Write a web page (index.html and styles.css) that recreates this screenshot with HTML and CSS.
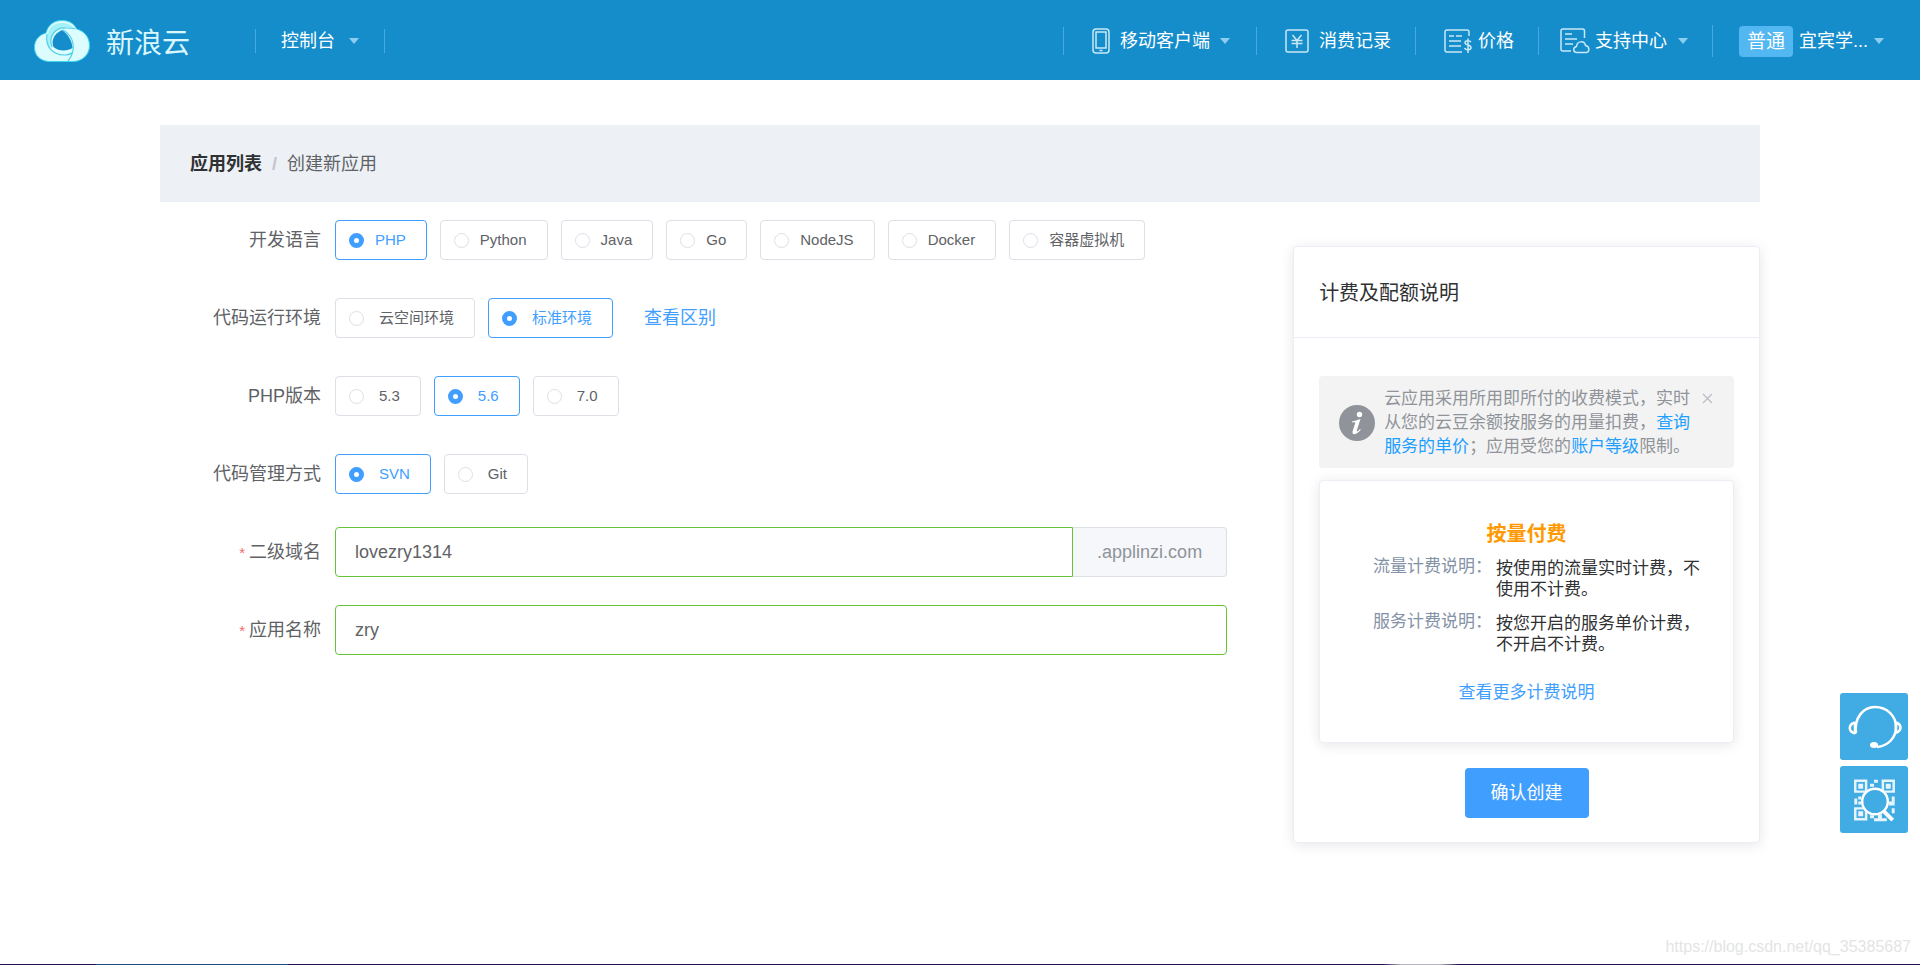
FILE: index.html
```html
<!DOCTYPE html>
<html lang="zh-CN">
<head>
<meta charset="utf-8">
<meta name="viewport" content="width=device-width, initial-scale=1">
<title>创建新应用 - 新浪云</title>
<link rel="stylesheet" href="styles.css">
</head>
<body>
<header class="topbar">
  <a class="brand" href="#">
    <svg class="brand-mark" viewBox="0 0 56 42" aria-hidden="true">
      <path d="M12 13C14 5 20 .5 28 .5c7 0 12 3 14.500 8.500C50 11 55.500 17 55.500 25.500 55.500 35 48 41.500 39 41.500H16C7 41.500.5 36 .5 27.500.5 20 5 15 12 13z" fill="#dcfcfe" stroke="#3fd6ee"/>
      <path d="M14 13C16 6 21 3 28 3c5 0 10 2 12 6-9-3-18 0-22 7-3 6-2 10 0 13C14 26 12 20 14 13z" fill="#a6f1f7"/>
      <path d="M28 10c6 4 10 11 10.500 18-5 3.500-14 3.500-19-1-2.500-6 0-13 8.500-17z" fill="#168dcb"/>
      <path d="M13 14c-2 13 6 21 17 21 4 0 7-1 9-3M29 10c11 6 14 20 5 31M18 27c-4-10 3-20 14-19 4 0 7 0 9 1" fill="none" stroke="#4fd0ea" stroke-width="1.200"/>
    </svg>
    <span class="brand-name">新浪云</span>
  </a>
  <nav class="nav-main" aria-label="主导航">
    <a class="nav-console" href="#">控制台<span class="caret"></span></a>
  </nav>
  <nav class="nav-side" aria-label="用户导航">
    <a class="nav-item nav-mobile" href="#">
      <svg width="18" height="26" viewBox="0 0 18 26" aria-hidden="true"><g fill="none" stroke="#c9e8f8" stroke-width="1.500"><rect x="1" y="1" width="16" height="24" rx="3"/><path d="M4 4h10v16H4zM7.500 22.500h3"/></g></svg>
      <span>移动客户端</span><span class="caret"></span>
    </a>
    <a class="nav-item nav-bill" href="#">
      <svg width="24" height="24" viewBox="0 0 24 24" aria-hidden="true"><g fill="none" stroke="#c9e8f8" stroke-width="1.500"><rect x="1" y="1" width="22" height="22" rx="2"/><path d="M7.500 6l4.500 5.500L16.500 6M6.500 11.500h11M6.500 14.500h11M12 11.500V19"/></g></svg>
      <span>消费记录</span>
    </a>
    <a class="nav-item nav-price" href="#">
      <svg width="28" height="25" viewBox="0 0 28 25" aria-hidden="true"><g fill="none" stroke="#c9e8f8" stroke-width="1.500"><path d="M25 7V3q0-2-2-2H3Q1 1 1 3v18q0 2 2 2h15M5 7h5M12 7h6M5 12h12M5 17h12"/><path d="M27 13c-1-1.500-6-2-6 .800 0 2.700 6 1.500 6 4.700 0 3-5.500 2.800-6.500.500M24 9.500v14.500"/></g></svg>
      <span>价格</span>
    </a>
    <a class="nav-item nav-help" href="#">
      <svg width="30" height="26" viewBox="0 0 30 26" aria-hidden="true"><g fill="none" stroke="#c9e8f8" stroke-width="1.500"><path d="M24.500 10V3q0-2-2-2H3Q1 1 1 3v18q0 2 2 2h8M5 6h7M5 11h12M5 16h8"/><path d="M17 24.500c-4 0-4.500-5-.500-6 .500-6 8-6 9-1 4.500 1 4.500 7 .500 7z"/></g></svg>
      <span>支持中心</span><span class="caret"></span>
    </a>
    <a class="nav-item nav-user" href="#">
      <span class="level">普通</span><span>宜宾学...</span><span class="caret"></span>
    </a>
  </nav>
</header>

<main class="page">
  <nav class="breadcrumb" aria-label="面包屑">
    <a href="#">应用列表</a><span class="slash">/</span><span>创建新应用</span>
  </nav>
  <form class="columns" action="#">
    <div class="fields">
      <div class="row" role="radiogroup" aria-labelledby="lang">
        <span class="row-label" id="lang">开发语言</span>
        <div class="options options-tight">
          <label class="option"><input type="radio" name="lang" checked><span>PHP</span></label>
          <label class="option"><input type="radio" name="lang"><span>Python</span></label>
          <label class="option"><input type="radio" name="lang"><span>Java</span></label>
          <label class="option"><input type="radio" name="lang"><span>Go</span></label>
          <label class="option"><input type="radio" name="lang"><span>NodeJS</span></label>
          <label class="option"><input type="radio" name="lang"><span>Docker</span></label>
          <label class="option"><input type="radio" name="lang"><span>容器虚拟机</span></label>
        </div>
      </div>
      <div class="row" role="radiogroup" aria-labelledby="env">
        <span class="row-label" id="env">代码运行环境</span>
        <div class="options">
          <label class="option"><input type="radio" name="env"><span>云空间环境</span></label>
          <label class="option"><input type="radio" name="env" checked><span>标准环境</span></label>
          <a class="link compare" href="#">查看区别</a>
        </div>
      </div>
      <div class="row" role="radiogroup" aria-labelledby="ver">
        <span class="row-label" id="ver">PHP版本</span>
        <div class="options">
          <label class="option"><input type="radio" name="ver"><span>5.3</span></label>
          <label class="option"><input type="radio" name="ver" checked><span>5.6</span></label>
          <label class="option"><input type="radio" name="ver"><span>7.0</span></label>
        </div>
      </div>
      <div class="row" role="radiogroup" aria-labelledby="vcs">
        <span class="row-label" id="vcs">代码管理方式</span>
        <div class="options">
          <label class="option"><input type="radio" name="vcs" checked><span>SVN</span></label>
          <label class="option"><input type="radio" name="vcs"><span>Git</span></label>
        </div>
      </div>
      <div class="row">
        <label class="row-label required" for="domain">二级域名</label>
        <div class="input-group">
          <input class="text-input" id="domain" type="text" value="lovezry1314">
          <span class="suffix">.applinzi.com</span>
        </div>
      </div>
      <div class="row">
        <label class="row-label required" for="appname">应用名称</label>
        <input class="text-input" id="appname" type="text" value="zry">
      </div>
    </div>

    <aside class="card billing">
      <h2 class="card-title">计费及配额说明</h2>
      <div class="card-body">
        <div class="notice">
          <svg class="notice-icon" viewBox="0 0 36 36" aria-hidden="true"><circle cx="18" cy="18" r="18" fill="#909399"/><circle cx="20.500" cy="9.500" r="2.700" fill="#fff"/><path d="M13 16.500c3-.500 5-1.500 8.500-2.500l-3.700 11.500c-.4 1.300.4 1.600 3.200-1.500l.8.700c-3 4-8.300 6.300-8.300 2.800 0-1 .3-1.800 2.800-9.800-.1-.6-1-.5-3.300-.3z" fill="#fff"/></svg>
          <p class="notice-text">云应用采用所用即所付的收费模式，实时从您的云豆余额按服务的用量扣费，<a href="#">查询服务的单价</a>；应用受您的<a href="#">账户等级</a>限制。</p>
          <button class="close" type="button" aria-label="关闭"><svg width="11" height="11" viewBox="0 0 11 11" aria-hidden="true"><path d="M1 1l9 9M10 1l-9 9" stroke="#b9bcc4" stroke-width="1.200"/></svg></button>
        </div>
        <section class="card plan">
          <h3>按量付费</h3>
          <dl>
            <dt>流量计费说明：</dt><dd>按使用的流量实时计费，不使用不计费。</dd>
            <dt>服务计费说明：</dt><dd>按您开启的服务单价计费，不开启不计费。</dd>
          </dl>
          <a class="link" href="#">查看更多计费说明</a>
        </section>
        <button class="submit" type="submit">确认创建</button>
      </div>
    </aside>
  </form>
</main>

<div class="floaters">
  <button type="button" aria-label="在线客服">
    <svg viewBox="0 0 68 67" aria-hidden="true"><g fill="none" stroke="#fff" stroke-width="2.500"><path d="M16 40C14 25 23 14 35 14s21 9 21 20-8 19-19 20"/><path d="M15 29.500c-7 2-7 9 0 11M15 29v12M56 29.500c6 2 6 8 0 10.500M56 29v11"/></g><ellipse cx="34" cy="52" rx="4" ry="3" fill="#fff"/></svg>
  </button>
  <button type="button" aria-label="二维码">
    <svg viewBox="0 0 68 68" aria-hidden="true"><g fill="none" stroke="#e6f5fc" stroke-width="2.500"><path d="M15 15h11v11H15zM43 15h11v11H43zM15 43h11v11H15z"/></g><g fill="#e6f5fc"><path d="M18 18h5v5h-5zM46 18h5v5h-5zM18 46h5v5h-5zM34 14h4v3h-4zM30 18h4v3h-4zM14 33h3v6h-3zM18 36h3v3h-3zM18 31h3v3h-3zM52 31h3v9h-3zM49 36h3v4h-3zM30 50h4v3h-4zM34 53h13v3H34zM38 49h4v4h-4zM52 43h3v5h-3z"/></g><circle cx="35" cy="36" r="14" fill="#41abe4"/><g fill="none" stroke="#fff"><circle cx="35" cy="36" r="13" stroke-width="2.500"/><path d="M44 46l9 9" stroke-width="4"/></g></svg>
  </button>
</div>
<p class="site-mark">https://blog.csdn.net/qq_35385687</p>
<div class="edge"></div>
</body>
</html>
```

FILE: styles.css
```css
* { box-sizing: border-box; }

body {
  margin: 0;
  position: relative;
  min-height: 100vh;
  background: #fff;
  color: #606266;
  font: 18px/24px "Liberation Sans", "Noto Sans CJK SC", sans-serif;
}

a { color: inherit; text-decoration: none; }
button, input { font: inherit; }
h2, h3, p, dl, dd { margin: 0; }

/* top bar */
.topbar {
  display: flex;
  align-items: center;
  min-width: 1240px;
  height: 80px;
  padding: 2px 36px 0 34px;
  background: #168dcb;
  color: #fff;
}
.brand { display: flex; align-items: center; gap: 16px; margin-right: 65px; }
.brand-mark { width: 56px; height: 42px; }
.brand-name { padding-top: 6px; font-size: 28px; line-height: 40px; color: #d9f7fd; }
.nav-main { border: solid #46a9df; border-width: 0 1px; padding: 0 25px; }
.nav-console { display: flex; align-items: center; gap: 14px; }
.nav-side { display: flex; align-items: center; margin-left: auto; }
.nav-item {
  display: flex;
  align-items: center;
  gap: 10px;
  height: 28px;
  padding: 0 24px 0 28px;
  border-left: 1px solid #46a9df;
  white-space: nowrap;
}
.nav-mobile { padding-right: 26px; }
.nav-price { gap: 6px; }
.nav-help { gap: 5px; padding-left: 21px; }
.nav-help .caret { margin-left: 6px; }
.nav-user { gap: 6px; height: 32px; padding-left: 26px; padding-right: 0; }
.level {
  padding: 0 8px;
  border-radius: 4px;
  background: #53b8f2;
  font-size: 19px;
  line-height: 31px;
}
.caret { border: 5px solid transparent; border-top: 6px solid #8ccdf0; border-bottom: 0; }

/* page */
.page {
  width: 84%;
  min-width: 1240px;
  max-width: 1600px;
  margin: 0 auto;
  padding: 45px 0;
}
.breadcrumb {
  display: flex;
  align-items: center;
  height: 77px;
  padding: 0 30px;
  background: #edf1f6;
}
.breadcrumb a { color: #303133; font-weight: bold; }
.slash { margin: 0 10px; color: #c0c4cc; font-weight: bold; }

.columns {
  display: grid;
  grid-template-columns: minmax(0, 16fr) minmax(0, 7fr);
  gap: 66px;
  align-items: start;
}
.fields { display: flex; flex-direction: column; gap: 28px; padding-top: 13px; }
.row {
  display: grid;
  grid-template-columns: 161px minmax(0, 1fr);
  gap: 14px;
  align-items: center;
  min-height: 50px;
}
.row-label { text-align: right; }
.required::before { content: "*"; margin-right: 4px; color: #f56c6c; font-size: 15px; }

.options { display: flex; align-items: center; gap: 13px; }
.option {
  display: flex;
  align-items: center;
  gap: 15px;
  height: 40px;
  padding: 0 20px 0 13px;
  border: 1px solid #dcdfe6;
  border-radius: 4px;
  font-size: 15px;
  white-space: nowrap;
}
.options-tight .option { gap: 11px; }
.option input {
  appearance: none;
  width: 15px;
  height: 15px;
  margin: 0;
  border: 1px solid #dcdfe6;
  border-radius: 50%;
  background: #fff;
}
.option input:checked { border: 5px solid #409eff; }
.option:has(:checked) { border-color: #409eff; color: #409eff; }
.link { color: #409eff; }
.compare { margin-left: 18px; }

.text-input {
  width: 100%;
  height: 50px;
  padding: 0 19px;
  border: 1px solid #67c23a;
  border-radius: 4px;
  background: #fff;
  color: #606266;
  outline: 0;
}
.input-group { display: flex; }
.input-group .text-input { flex: 1; min-width: 0; border-radius: 4px 0 0 4px; }
.suffix {
  padding: 0 24px;
  border: 1px solid #dcdfe6;
  border-left: 0;
  border-radius: 0 4px 4px 0;
  background: #f5f7fa;
  color: #909399;
  line-height: 48px;
}

/* billing card */
.card {
  border: 1px solid #ebeef5;
  border-radius: 4px;
  background: #fff;
  box-shadow: 0 2px 13px rgba(0, 0, 0, .1);
}
.billing { margin-top: 44px; font-size: 17px; }
.card-title {
  padding: 34px 25px 32px;
  border-bottom: 1px solid #ebeef5;
  color: #303133;
  font-size: 20px;
  font-weight: normal;
}
.card-body { display: flex; flex-direction: column; padding: 38px 25px 24px; }
.notice {
  position: relative;
  display: flex;
  align-items: center;
  gap: 9px;
  padding: 11px 34px 9px 20px;
  border-radius: 4px;
  background: #f3f3f3;
  color: #909399;
}
.notice-icon { flex: none; width: 36px; height: 36px; }
.notice a { color: #1e9fff; }
.close {
  position: absolute;
  top: 17px;
  right: 21px;
  display: flex;
  padding: 0;
  border: 0;
  background: none;
}
.plan { margin-top: 12px; padding: 41px 26px 37px; text-align: center; }
.plan h3 { color: #ff9900; font-size: 20px; }
.plan dl {
  display: grid;
  grid-template-columns: minmax(0, 1fr) 211px;
  gap: 12px 4px;
  margin: 11px 0 26px;
  text-align: left;
}
.plan dt { color: #8492a6; line-height: 20px; text-align: right; }
.plan dd { padding-top: 1px; color: #303133; line-height: 21px; }
.submit {
  align-self: center;
  height: 50px;
  margin-top: 25px;
  padding: 0 26px;
  border: 0;
  border-radius: 4px;
  background: #409eff;
  color: #fff;
  font-size: 18px;
}

/* overlays */
.floaters { position: fixed; right: 12px; bottom: 132px; display: grid; gap: 6px; }
.floaters button {
  display: block;
  width: 68px;
  height: 67px;
  padding: 0;
  border: 0;
  border-radius: 3px;
  background: #41abe4;
}
.floaters svg { display: block; width: 100%; height: 100%; }
.site-mark { position: absolute; right: 9px; bottom: 6px; color: #e4e4e4; font-size: 16px; }
.edge {
  position: absolute;
  left: 0;
  right: 0;
  bottom: 0;
  height: 1px;
  background: linear-gradient(90deg, #26114a 5%, #1f4a86 5% 15%, #26114a 15% 72%, #b9b4c4 73% 75%, #26114a 76%);
}
```
